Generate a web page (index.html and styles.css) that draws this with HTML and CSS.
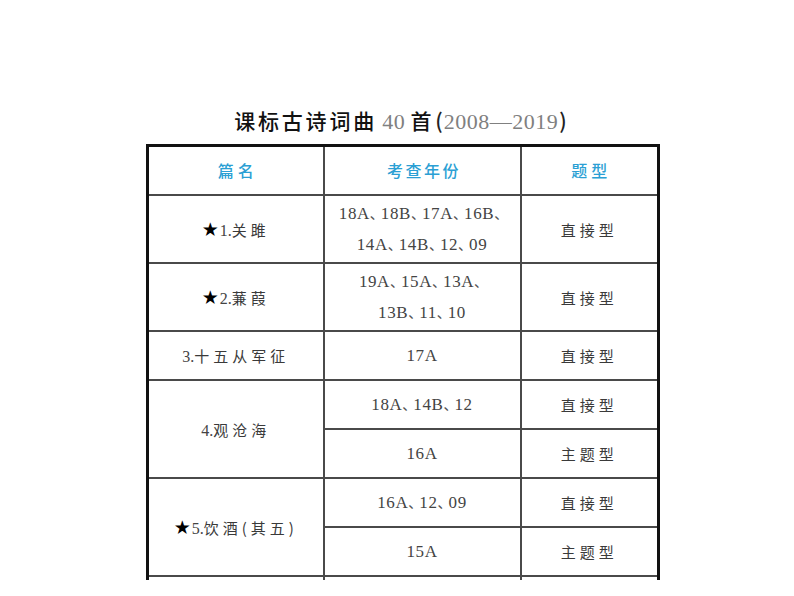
FILE: index.html
```html
<!DOCTYPE html>
<html lang="zh">
<head>
<meta charset="utf-8">
<title>课标古诗词曲 40 首</title>
<link rel="stylesheet" href="styles.css">
</head>
<body>
<div class="page">
  <h1 class="title"><span class="zh">课标古诗词曲</span> <span class="num">40</span> <span class="zh">首</span><span class="paren">(</span><span class="num">2008—2019</span><span class="paren">)</span></h1>
  <table class="poems">
    <colgroup>
      <col class="c1"><col class="c2"><col class="c3">
    </colgroup>
    <thead>
      <tr class="h">
        <th class="first">篇名</th><th class="mid">考查年份</th><th class="last">题型</th>
      </tr>
    </thead>
    <tbody>
      <tr class="tall">
        <td class="name first"><span class="star">★</span><span class="n">1.</span>关雎</td>
        <td class="yr">18A<span class="dun">、</span>18B<span class="dun">、</span>17A<span class="dun">、</span>16B<span class="dun">、</span><br>14A<span class="dun">、</span>14B<span class="dun">、</span>12<span class="dun">、</span>09</td>
        <td class="type last">直接型</td>
      </tr>
      <tr class="tall">
        <td class="name first"><span class="star">★</span><span class="n">2.</span>蒹葭</td>
        <td class="yr">19A<span class="dun">、</span>15A<span class="dun">、</span>13A<span class="dun">、</span><br>13B<span class="dun">、</span>11<span class="dun">、</span>10</td>
        <td class="type last">直接型</td>
      </tr>
      <tr class="row">
        <td class="name first"><span class="n">3.</span>十五从军征</td>
        <td class="yr">17A</td>
        <td class="type last">直接型</td>
      </tr>
      <tr class="row">
        <td class="name first" rowspan="2"><span class="n">4.</span>观沧海</td>
        <td class="yr">18A<span class="dun">、</span>14B<span class="dun">、</span>12</td>
        <td class="type last">直接型</td>
      </tr>
      <tr class="row">
        <td class="yr">16A</td>
        <td class="type last">主题型</td>
      </tr>
      <tr class="row">
        <td class="name first" rowspan="2"><span class="star">★</span><span class="n">5.</span>饮酒(其五)</td>
        <td class="yr">16A<span class="dun">、</span>12<span class="dun">、</span>09</td>
        <td class="type last">直接型</td>
      </tr>
      <tr class="row">
        <td class="yr">15A</td>
        <td class="type last">主题型</td>
      </tr>
      <tr class="stub">
        <td class="first"></td><td></td><td class="last"></td>
      </tr>
    </tbody>
  </table>
</div>
</body>
</html>
```
FILE: styles.css
```css
html, body {
  margin: 0;
  padding: 0;
  background: #fff;
}
.page {
  width: 794px;
  height: 596px;
  overflow: hidden;
  padding-top: 107px;
  box-sizing: border-box;
}
.title {
  margin: 0 0 11px 0;
  height: 26px;
  line-height: 26px;
  text-align: center;
  font-size: 21px;
  font-weight: normal;
  white-space: nowrap;
  padding-left: 8px;
}
.title .zh {
  font-family: "Noto Sans CJK SC", sans-serif;
  font-weight: 500;
  color: #111;
  letter-spacing: 2.8px;
}
.title .num {
  font-family: "Liberation Serif", serif;
  color: #808080;
  font-size: 22px;
  letter-spacing: 0.5px;
}
.title .paren {
  font-family: "Noto Sans CJK SC", sans-serif;
  color: #222;
  font-weight: 500;
  margin: 0 1px;
}
.poems {
  margin-left: 146px;
  width: 511px;
  border-collapse: collapse;
  table-layout: fixed;
  border-top: 3px solid #111;
  border-left: 3px solid #111;
  border-right: 3px solid #111;
}
.c1 { width: 176px; }
.c2 { width: 197px; }
.c3 { width: 138px; }
.poems th, .poems td {
  border: 2px solid #4a4a4a;
  padding: 0;
  text-align: center;
  vertical-align: middle;
}
.poems .h th { border-top: 3px solid #111; }
.poems .first { border-left: 3px solid #111; }
.poems .last { border-right: 3px solid #111; }
.poems .h th {
  height: 45px;
  font-family: "Noto Sans CJK SC", sans-serif;
  font-weight: 500;
  font-size: 16px;
  color: #2b9fd4;
  letter-spacing: 4px;
  padding-left: 4px;
  padding-bottom: 2px;
}
.poems .h th.mid { letter-spacing: 2.5px; }
.tall td { height: 66px; }
.row td { height: 47px; }
.stub td {
  height: 3px;
  border-bottom: none;
}
.name, .type {
  font-family: "Noto Sans CJK SC", sans-serif;
  font-weight: 400;
  font-size: 15px;
  color: #3a3a3a;
  letter-spacing: 3.5px;
}
.name { letter-spacing: 4px; padding-left: 2px; }
.type { letter-spacing: 4px; padding-left: 4px; }
.name .n {
  font-family: "Liberation Serif", serif;
  font-size: 16px;
  letter-spacing: 0;
  color: #444;
}
.name .star {
  font-family: "DejaVu Sans", sans-serif;
  color: #000;
  font-size: 19px;
  letter-spacing: 0;
  margin-right: 1px;
}
.yr {
  font-family: "Liberation Serif", serif;
  font-size: 17px;
  color: #444;
  line-height: 31px;
  letter-spacing: 0.6px;
  padding-bottom: 2px;
}
.dun {
  font-family: "Noto Sans CJK SC", sans-serif;
  font-size: 14px;
  letter-spacing: -3px;
  color: #555;
}
```
